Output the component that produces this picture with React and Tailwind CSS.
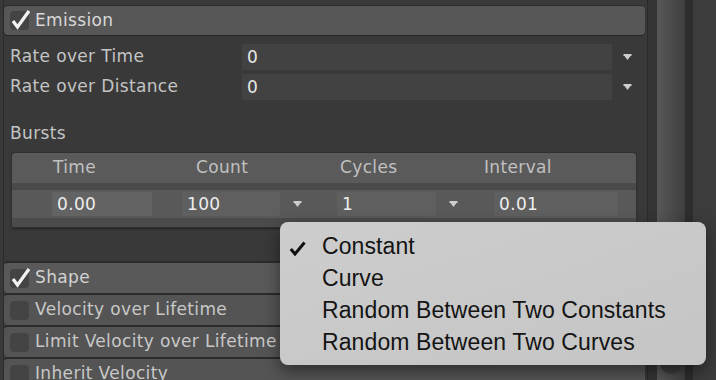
import React from "react";

const Arrow = ({ className = "" }) => (
  <svg width="9" height="7" viewBox="0 0 9 7" className={className}>
    <path d="M0.5 0h8v2h-8z M1.5 2h6l-3 4z" fill="#cdcdcd" />
  </svg>
);

const Checkbox = ({ checked }) => (
  <div className="relative mr-[6px] h-[19px] w-[19px] shrink-0 rounded-[4px] bg-[#444444]">
    {checked && (
      <svg
        width="22"
        height="22"
        viewBox="0 0 22 22"
        className="absolute left-0 top-[-2px]"
      >
        <path
          d="M3 12 L7.5 18 L19 2"
          fill="none"
          stroke="#f2f2f2"
          strokeWidth="3.2"
        />
      </svg>
    )}
  </div>
);

const FieldRow = ({ label, value, className = "" }) => (
  <div className={`flex h-[26px] shrink-0 items-center ${className}`}>
    <div className="w-[238px] shrink-0 pl-[6px]">{label}</div>
    <div className="h-[26px] w-[370px] shrink-0 bg-[#424242] pl-[5px] leading-[26px] text-[#e8e8e8]">
      {value}
    </div>
    <Arrow className="ml-[11px]" />
  </div>
);

const ModuleRow = ({ label, checked, light }) => (
  <div
    className={`flex h-[32px] shrink-0 items-center rounded-l-[4px] border-t-2 border-[#2b2b2b] pl-[6px] ${
      light ? "bg-[#595959] text-[#d2d2d2]" : "bg-[#545454] text-[#c8c8c8]"
    }`}
  >
    <Checkbox checked={checked} />
    <span className="whitespace-nowrap">{label}</span>
  </div>
);

const menuItems = [
  "Constant",
  "Curve",
  "Random Between Two Constants",
  "Random Between Two Curves",
];

export default function App() {
  return (
    <div className="relative flex h-[380px] w-[716px] overflow-hidden bg-[#393939] font-['DejaVu_Sans',sans-serif] text-[17px] tracking-[0.35px] text-[#c4c4c4]">
      <div className="w-[3px] shrink-0" />

      {/* inspector column */}
      <div className="flex w-[644px] shrink-0 flex-col border-l border-[#2b2b2b] pr-[2px]">
        <div className="mt-[5px] flex h-[30px] shrink-0 items-center rounded-[4px] border-t border-[#2c2c2c] bg-[#575757] pl-[6px] text-[#d8d8d8] shadow-[0_1px_1px_rgba(0,0,0,0.35)]">
          <Checkbox checked />
          <span>Emission</span>
        </div>

        <FieldRow label="Rate over Time" value="0" className="mt-[9px]" />
        <FieldRow label="Rate over Distance" value="0" className="mt-[4px]" />

        <div className="mt-[22px] h-[22px] shrink-0 pl-[6px] leading-[22px]">Bursts</div>

        <div className="ml-[8px] mt-[8px] w-[624px] shrink-0 shadow-[0_1px_2px_rgba(0,0,0,0.4)]">
          <div className="flex h-[31px] items-center rounded-t-[4px] border-t border-[#2f2f2f] bg-[#5a5a5a] pl-[41px] text-[#c0c0c0]">
            <span className="w-[143px]">Time</span>
            <span className="w-[144px]">Count</span>
            <span className="w-[144px]">Cycles</span>
            <span>Interval</span>
          </div>
          <div className="h-[7px] bg-[#4a4a4a]" />
          <div className="flex h-[28px] items-center bg-[#595959] pl-[40px] text-[#ededed]">
            <div className="h-[24px] w-[100px] bg-[#636363] pl-[5px] leading-[24px]">0.00</div>
            <div className="ml-[30px] h-[24px] w-[98px] bg-[#5f5f5f] pl-[5px] leading-[24px]">100</div>
            <Arrow className="ml-[13px]" />
            <div className="ml-[35px] h-[24px] w-[99px] bg-[#5f5f5f] pl-[5px] leading-[24px]">1</div>
            <Arrow className="ml-[13px]" />
            <div className="ml-[36px] h-[24px] w-[124px] bg-[#5f5f5f] pl-[5px] leading-[24px]">0.01</div>
          </div>
          <div className="h-[10px] border-b border-[#2e2e2e] bg-[#4b4b4b]" />
        </div>

        <div className="mt-[33px] flex shrink-0 flex-col">
          <ModuleRow label="Shape" checked light />
          <ModuleRow label="Velocity over Lifetime" />
          <ModuleRow label="Limit Velocity over Lifetime" />
          <ModuleRow label="Inherit Velocity" />
        </div>
      </div>

      {/* scrollbar column */}
      <div className="flex flex-1">
        <div className="w-[1px] bg-[#2a2a2a]" />
        <div className="w-[9px] bg-[#353535]" />
        <div className="relative w-[28px] bg-gradient-to-r from-[#585858] to-[#3f3f3f]">
          <div className="absolute bottom-[6px] left-[3px] h-[14px] w-[22px] rounded-b-full bg-[#3c3c3c]" />
        </div>
        <div className="w-[8px] bg-[#2d2d2d]" />
        <div className="flex-1 bg-[#3c3c3c]" />
      </div>

      {/* popup menu */}
      <div className="absolute left-[280px] top-[222px] h-[143px] w-[426px] rounded-[8px] bg-gradient-to-br from-[#cdcdcd] to-[#c5c5c5] pl-[42px] pt-[8px] font-['Liberation_Sans',Arial,sans-serif] text-[23px] tracking-[0.1px] text-[#141414] shadow-[0_6px_16px_rgba(0,0,0,0.45)]">
        <svg
          width="17"
          height="15"
          viewBox="0 0 17 15"
          className="absolute left-[9px] top-[19px]"
        >
          <path
            d="M1.8 8 L6 13 L15.5 1.5"
            fill="none"
            stroke="#111"
            strokeWidth="3"
          />
        </svg>
        {menuItems.map(item => (
          <div key={item} className="h-[32px] leading-[32px]">
            {item}
          </div>
        ))}
      </div>
    </div>
  );
}
